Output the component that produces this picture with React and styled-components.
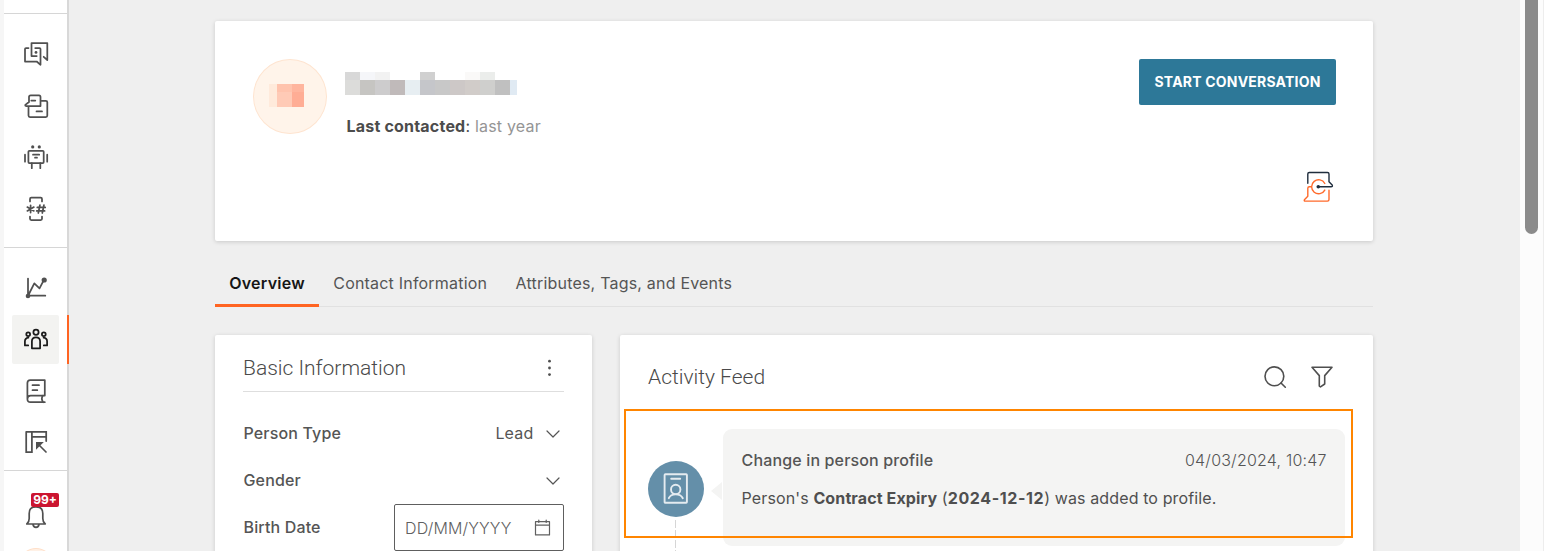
import React from "react";
import styled, { createGlobalStyle } from "styled-components";

const Global = createGlobalStyle`
  *, *::before, *::after { box-sizing: border-box; }
  body { margin: 0; background: #efefef; font-family: Inter, "Liberation Sans", sans-serif; color: #4f4f4f; font-size: 16px; }
  button, input { font: inherit; color: inherit; }
`;

const Page = styled.div`
  display: flex;
  height: 551px;
  overflow: hidden;
  background: #efefef;
`;

const Sidebar = styled.nav`
  width: 69px;
  flex: none;
  display: flex;
  flex-direction: column;
  background: #fff;
  border-left: 4px solid #f6f6f6;
  border-right: 2px solid #d8d8d8;
`;

const NavGroup = styled.div`
  height: ${(p) => p.$height}px;
  flex: none;
  padding-top: ${(p) => p.$top || 0}px;
  display: flex;
  flex-direction: column;
  align-items: center;
  gap: ${(p) => p.$gap || 2.6}px;
  border-bottom: ${(p) => (p.$last ? "none" : "1px solid #d6d6d6")};
`;

const NavItem = styled.a`
  position: relative;
  width: 47px;
  height: 49px;
  flex: none;
  padding: 1px 0 0 1px;
  display: flex;
  align-items: center;
  justify-content: center;
  border-radius: 2px;
  color: ${(p) => (p.$active ? "#1b1b1b" : "#505050")};
  background: ${(p) => (p.$active ? "#f3f3f1" : "transparent")};
  &::after {
    content: "";
    display: ${(p) => (p.$active ? "block" : "none")};
    position: absolute;
    right: -10px;
    top: 0;
    width: 2px;
    height: 100%;
    background: #ff6422;
  }
`;

const Glyph = styled.svg`
  width: ${(p) => p.$w || 26}px;
  height: ${(p) => p.$h || p.$w || 26}px;
  flex: none;
  display: block;
  fill: none;
  stroke: currentColor;
  stroke-width: ${(p) => p.$stroke || 1.6};
  stroke-linecap: round;
  stroke-linejoin: round;
`;

const Badge = styled.span`
  position: absolute;
  left: 19px;
  top: 0;
  width: 28px;
  height: 14px;
  border-radius: 2px;
  background: #cb1530;
  color: #fff;
  font-size: 12px;
  font-weight: 700;
  line-height: 14px;
  text-align: center;
`;

const UserDot = styled.span`
  width: 36px;
  height: 36px;
  flex: none;
  margin: 3px 0 0 1px;
  border-radius: 50%;
  background: #fff1e6;
  border: 1px solid #ffdfc8;
`;

const Main = styled.main`
  flex: 1;
  padding: 21px 147px 0 146px;
`;

const Card = styled.section`
  background: #fff;
  border-radius: 2px;
  box-shadow: 0 1px 4px rgba(0, 0, 0, 0.16);
`;

const ProfileCard = styled(Card)`
  height: 220px;
  padding: 38px 37px 38px 38px;
  display: flex;
`;

const Avatar = styled.div`
  width: 74px;
  height: 75px;
  padding: 24px 0 0 15px;
  border-radius: 50%;
  border: 1px solid #fee4d0;
  background: #fff4ea;
`;

const Mosaic = styled.div`
  display: grid;
  grid-template-columns: ${(p) => p.$cols};
  grid-template-rows: 8px 15px;
`;

const Cell = styled.span`
  background: ${(p) => p.$c};
`;

const Identity = styled.div`
  flex: 1;
  padding: 13px 0 0 18px;
`;

const Contacted = styled.p`
  margin: 21px 0 0 1.5px;
  line-height: 20px;
  letter-spacing: 0.2px;
  color: #959595;
  b { color: #4c4c4c; font-weight: 700; }
  i { color: #4c4c4c; font-style: normal; }
`;

const Actions = styled.div`
  display: flex;
  flex-direction: column;
  justify-content: space-between;
  align-items: flex-end;
`;

const PrimaryButton = styled.button`
  width: 197px;
  height: 46px;
  padding: 0 0 1px;
  border: 0;
  border-radius: 2px;
  background: #2d7898;
  color: #fff;
  font-size: 14px;
  font-weight: 700;
  letter-spacing: 0.2px;
`;

const BrandMark = styled(Glyph)`
  margin-right: 2px;
`;

const Tabs = styled.div`
  height: 66px;
  display: flex;
  align-items: flex-end;
  box-shadow: inset 0 -1px #e1e1e1;
`;

const Tab = styled.a`
  height: 46px;
  padding: 11px 14.2px 0;
  line-height: 22px;
  letter-spacing: ${(p) => p.$ls || 0}px;
  font-weight: ${(p) => (p.$active ? 600 : 400)};
  color: ${(p) => (p.$active ? "#161616" : "#555")};
  border-bottom: 3px solid ${(p) => (p.$active ? "#ff6422" : "transparent")};
`;

const Columns = styled.div`
  display: grid;
  grid-template-columns: 377px 753px;
  gap: 28px;
  margin-top: 28px;
`;

const InfoCard = styled(Card)`
  height: 300px;
  padding: 0 28px;
`;

const InfoHeader = styled.header`
  height: 57px;
  padding: 9px 6px 0 0;
  display: flex;
  align-items: center;
  justify-content: space-between;
  border-bottom: 1px solid #dedede;
`;

const Heading = styled.h2`
  margin: 0;
  font: 300 21px/28px Roboto, sans-serif;
  color: #4a4a4a;
`;

const Fields = styled.div`
  padding-top: 18px;
`;

const Field = styled.div`
  height: 47px;
  display: flex;
  align-items: center;
  justify-content: space-between;
`;

const Label = styled.span`
  font-weight: 500;
  letter-spacing: 0.15px;
  padding: 0 0 2px 0.5px;
  color: #555;
`;

const Picker = styled.span`
  display: flex;
  align-items: center;
  gap: 12px;
  padding: 0 4.5px 2px 0;
  letter-spacing: 0.2px;
  color: #555;
  svg { margin-top: 2px; }
`;

const DateBox = styled.div`
  width: 170px;
  height: 47px;
  padding: 0 12px 0 10px;
  display: flex;
  align-items: center;
  justify-content: space-between;
  border: 1px solid #5e5e5e;
  border-radius: 2px;
  font-weight: 300;
  letter-spacing: 0.15px;
  color: #606060;
`;

const FeedCard = styled(Card)`
  position: relative;
  height: 300px;
  padding: 26px 28px 0;
`;

const FeedHeader = styled.header`
  height: 32px;
  padding-right: 11px;
  display: flex;
  align-items: center;
  justify-content: space-between;
`;

const Tools = styled.div`
  display: flex;
  gap: 23px;
`;

const Entry = styled.article`
  display: flex;
  margin-top: 36px;
`;

const Rail = styled.div`
  width: 56px;
  padding-top: 32px;
  display: flex;
  flex-direction: column;
  align-items: center;
`;

const EventDot = styled.div`
  width: 56px;
  height: 56px;
  flex: none;
  display: flex;
  align-items: center;
  justify-content: center;
  border-radius: 50%;
  background: #648fa9;
  color: #e4ebf0;
`;

const RailLine = styled.div`
  width: 1px;
  height: 60px;
  margin-left: -1px;
  margin-top: 3px;
  background: repeating-linear-gradient(#d6d6d6 0 8px, transparent 8px 10px);
`;

const Pointer = styled.div`
  margin: 53px 1px 0 7px;
  width: 11px;
  height: 18px;
  background: #f4f4f3;
  clip-path: polygon(0 50%, 100% 0, 100% 100%);
`;

const Bubble = styled.div`
  width: 622px;
  height: 117px;
  padding: 20px 18.4px 0 18.6px;
  border-radius: 9px;
  background: #f4f4f3;
`;

const BubbleTop = styled.div`
  display: flex;
  justify-content: space-between;
  line-height: 22px;
  letter-spacing: 0.14px;
  font-weight: 500;
  color: #555;
  time { font-weight: 300; letter-spacing: 0.2px; }
`;

const Message = styled.p`
  margin: 16px 0 0;
  line-height: 22px;
  letter-spacing: 0.12px;
  b { font-weight: 700; }
  time { font-weight: 700; letter-spacing: 0.6px; }
`;

const Highlight = styled.div`
  position: absolute;
  left: 4px;
  top: 74px;
  width: 729px;
  height: 129px;
  border: 2px solid #ff8500;
  pointer-events: none;
`;

const Scrollbar = styled.div`
  width: 24px;
  flex: none;
  padding-left: 5px;
  background: #fcfcfc;
  border-right: 1px solid #ededed;
`;

const Thumb = styled.div`
  width: 13px;
  height: 234px;
  border-radius: 0 0 7px 7px;
  background: #8b8b8b;
`;

const NAV_TOP = [
  <>
    <path d="M13.7 15H8.5V2H24.3V19L20.7 15.8" />
    <path d="M5.5 7H3Q2 7 2 8V20.5H13.7L17.5 23.8V8Q17.5 7 16.5 7H12.2" />
    <circle cx="13" cy="11.4" r="1.4" fill="currentColor" stroke="none" />
  </>,
  <>
    <path d="M6 9V4Q6 2.3 7.7 2.3H16Q17.5 2.3 17.5 4V13H3Q1.8 12.7 2.6 11.6ZM8.3 7.5H12.3" />
    <path d="M18.5 7.8H22.8Q24.3 7.8 24.3 9.3V22.5Q24.3 24 22.8 24H7Q5.5 24 5.5 22.5V14M13.5 18.4H19" />
  </>,
  <>
    <circle cx="9.7" cy="2.9" r="1.6" fill="currentColor" stroke="none" />
    <circle cx="16.3" cy="2.9" r="1.6" fill="currentColor" stroke="none" />
    <rect x="5.4" y="6.8" width="15.3" height="12.2" rx="1" />
    <path d="M10 10.7H16.2M12 13.7H14M2 10.7V17.7M24.2 10.7V17.7M8.8 19V24.2M17.3 19V24.2" />
  </>,
  <>
    <path d="M7 5.4V3Q7 1.7 8.3 1.7H17.7Q19 1.7 19 3V5.4M7 20.5V22.8Q7 24 8.3 24H17.7Q19 24 19 22.8V20.5" />
    <path d="M7.6 9.4V16.6M4.3 11.1L10.9 14.9M10.9 11.1L4.3 14.9M16.9 9.2L15.3 17M20.9 9.2L19.3 17M14.3 11.4H22.2M13.7 14.9H21.6" />
  </>,
];

const NAV_BOTTOM = [
  <>
    <path d="M5 3.6V20.7H22.3M5.7 19.5L11.3 8.3L16.5 13.3L20.7 5.3" />
    <circle cx="5" cy="21" r="2.3" fill="currentColor" stroke="none" />
    <circle cx="21.2" cy="5" r="2.6" fill="currentColor" stroke="none" />
  </>,
  <>
    <circle cx="13" cy="5.3" r="2.6" />
    <path d="M8.9 21.3V14.2Q8.9 10.3 13 10.3T17.1 14.2V21.3Z" />
    <circle cx="5.2" cy="7.3" r="1.9" />
    <circle cx="20.8" cy="7.3" r="1.9" />
    <path d="M5.4 10.7Q1.9 11.2 1.9 14.5V18.4H5.2M20.6 10.7Q24.1 11.2 24.1 14.5V18.4H20.8" />
  </>,
  <path d="M4.4 20.7V5Q4.4 2.2 7.2 2.2H21.8V17.5H7.6Q4.4 17.5 4.4 20.9T7.6 24.2H21.8M20 17.5Q17.5 20.9 20.3 24.2M9.5 7.2H16M9.5 12.2H14.3" />,
  <>
    <path d="M3.2 2.8H23.2V12M3.2 2.8V23H8.9V2.8M8.9 7.8H23.2M23 23L15 15" strokeLinejoin="miter" />
    <path d="M13 13H20.8L13 20.8Z" fill="currentColor" stroke="none" />
  </>,
];

const Chevron = () => (
  <Glyph $w={14} $h={8} $stroke={1.2} viewBox="0 0 14 8">
    <path d="M1 1L7 7L13 1" />
  </Glyph>
);

const NAME_ROWS = [
  "#d8d8d8", "#f5f6f9", "#f2f2f2", "#fff", "#fff", "#d0d0d0", "#fff", "#fff", "#faf9f8", "#ebedeb", "#fff", "#fff",
  "#dcdcda", "#c6c5c2", "#cdcccd", "#c0baba", "#e7eef2", "#c5c6ca", "#c8c8c8", "#cdc8c7", "#d1ccc9", "#cfcfcd", "#c0c0c0", "#e0eaf3",
];
const INITIALS = ["#ffeadb", "#ffc3ad", "#ffb59e", "#ffeadb", "#ffcab6", "#ffad95"];

export default function App() {
  return (
    <>
      <Global />
      <Page>
        <Sidebar>
          <NavGroup $height={14} />
          <NavGroup $height={234} $top={15}>
            {NAV_TOP.map((icon, i) => (
              <NavItem key={i}><Glyph $stroke={1.75} viewBox="0 0 26 26">{icon}</Glyph></NavItem>
            ))}
          </NavGroup>
          <NavGroup $height={223} $top={15.4} $gap={2.3}>
            {NAV_BOTTOM.map((icon, i) => (
              <NavItem key={i} $active={i === 1}><Glyph $stroke={1.75} viewBox="0 0 26 26">{icon}</Glyph></NavItem>
            ))}
          </NavGroup>
          <NavGroup $height={90} $top={22} $last>
            <NavItem>
              <Glyph $stroke={1.7} viewBox="0 1.6 26 26">
                <path d="M3.8 20.6Q6.2 18.5 6.2 15V10Q6.2 3.4 13 3.4T19.8 10V15Q19.8 18.5 22.2 20.6ZM9.9 20.8Q10.4 24 13 24T16.1 20.8" />
              </Glyph>
              <Badge>99+</Badge>
            </NavItem>
            <UserDot />
          </NavGroup>
        </Sidebar>

        <Main>
          <ProfileCard>
            <Avatar>
              <Mosaic $cols="8px 15px 12px">
                {INITIALS.map((c, i) => <Cell key={i} $c={c} />)}
              </Mosaic>
            </Avatar>
            <Identity>
              <Mosaic $cols="repeat(11, 15px) 7px">
                {NAME_ROWS.map((c, i) => <Cell key={i} $c={c} />)}
              </Mosaic>
              <Contacted><b>Last contacted</b><i>:</i> last year</Contacted>
            </Identity>
            <Actions>
              <PrimaryButton>START CONVERSATION</PrimaryButton>
              <BrandMark $w={32} $stroke={1.4} viewBox="-1 0.2 32 32">
                <path stroke="#1f2d3d" d="M4.8 12.5V3.2Q4.8 1.7 6.3 1.7H24.5Q26 1.7 26 3.2V11L29.2 14.2Q30 16 28 16H15.3" />
                <circle cx="15.3" cy="16" r="1.8" fill="#1f2d3d" stroke="none" />
                <path stroke="#ff6a2b" d="M21.8 12.7A7 7 0 1 0 21.8 19.3M8.3 16H6.3Q4.8 16 4.8 17.5V25.5L1.4 28.9Q.8 30.3 2.3 30.3H24.5Q26 30.3 26 28.8V19.5" />
              </BrandMark>
            </Actions>
          </ProfileCard>

          <Tabs>
            <Tab $active $ls={0.25}>Overview</Tab>
            <Tab $ls={0.2}>Contact Information</Tab>
            <Tab $ls={0.2}>Attributes, Tags, and Events</Tab>
          </Tabs>

          <Columns>
            <InfoCard>
              <InfoHeader>
                <Heading>Basic Information</Heading>
                <Glyph $w={18} viewBox="0 0 18 18">
                  {[2.2, 9, 15.6].map((y) => <circle key={y} cx="9.5" cy={y} r="1.4" fill="currentColor" stroke="none" />)}
                </Glyph>
              </InfoHeader>
              <Fields>
                <Field><Label>Person Type</Label><Picker>Lead <Chevron /></Picker></Field>
                <Field><Label>Gender</Label><Picker><Chevron /></Picker></Field>
                <Field>
                  <Label>Birth Date</Label>
                  <DateBox>
                    DD/MM/YYYY
                    <Glyph $w={17} $stroke={1.2} viewBox="0 0 17 17">
                      <path d="M1.5 2.7H15.5V15.9H1.5ZM1.5 6.2H15.5M4.8 1V3.5M12.2 1V3.5" />
                    </Glyph>
                  </DateBox>
                </Field>
              </Fields>
            </InfoCard>

            <FeedCard>
              <FeedHeader>
                <Heading>Activity Feed</Heading>
                <Tools>
                  <Glyph $w={24} viewBox="0 0 24 24">
                    <circle cx="11.4" cy="11.3" r="9.4" />
                    <path d="M18 18L22.3 22.2" />
                  </Glyph>
                  <Glyph $w={24} viewBox="0 0 24 24">
                    <path d="M2 2.3H22L14.7 10.6V19L10.5 21.9L9.3 21V10.6Z" />
                  </Glyph>
                </Tools>
              </FeedHeader>
              <Entry>
                <Rail>
                  <EventDot>
                    <Glyph $w={26} $h={32} $stroke={1.9} viewBox="0 0 26 32">
                      <rect x="1.6" y="1.3" width="22.3" height="28.5" rx="0.8" />
                      <path d="M8.2 5.8H17.2M5.8 25.2Q7.6 21.4 12.7 21.4T19.8 25.2" />
                      <circle cx="12.7" cy="16.4" r="4.7" />
                    </Glyph>
                  </EventDot>
                  <RailLine />
                </Rail>
                <Pointer />
                <Bubble>
                  <BubbleTop>Change in person profile<time>04/03/2024, 10:47</time></BubbleTop>
                  <Message>Person's <b>Contract Expiry</b> (<time>2024-12-12</time>) was added to profile.</Message>
                </Bubble>
              </Entry>
              <Highlight />
            </FeedCard>
          </Columns>
        </Main>
        <Scrollbar><Thumb /></Scrollbar>
      </Page>
    </>
  );
}
